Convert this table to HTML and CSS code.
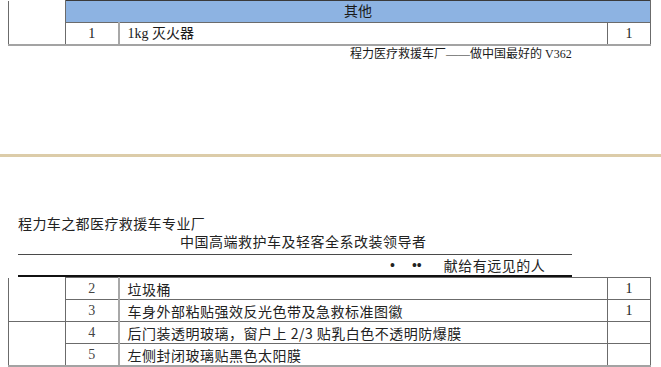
FILE: index.html
```html
<!DOCTYPE html>
<html lang="zh">
<head>
<meta charset="utf-8">
<link rel="stylesheet" href="styles.css">
</head>
<body>
<section class="page-top">
  <table class="tbl">
    <colgroup><col class="w1"><col class="w2"><col class="w3"><col class="w4"></colgroup>
    <tr class="row hdr-row"><td rowspan="2" class="c1"></td><td colspan="3" class="hdr">其他</td></tr>
    <tr class="row last"><td class="num">1</td><td class="item">1kg 灭火器</td><td class="qty">1</td></tr>
  </table>
  <p class="caption">程力医疗救援车厂——做中国最好的 V362</p>
</section>
<div class="divider"></div>
<section class="page-bottom">
  <div class="head">
    <div class="head-l1">程力车之都医疗救援车专业厂</div>
    <div class="head-l2">中国高端救护车及轻客全系改装领导者</div>
    <div class="head-l3"><span class="dot">•</span><span class="dots">••</span><span class="gift">献给有远见的人</span></div>
  </div>
  <table class="tbl tbl2">
    <colgroup><col class="w1"><col class="w2"><col class="w3"><col class="w4"></colgroup>
    <tr class="row"><td rowspan="2" class="c1"></td><td class="num">2</td><td class="item">垃圾桶</td><td class="qty">1</td></tr>
    <tr class="row"><td class="num">3</td><td class="item">车身外部粘贴强效反光色带及急救标准图徽</td><td class="qty">1</td></tr>
    <tr class="row"><td rowspan="2" class="c1 last"></td><td class="num">4</td><td class="item">后门装透明玻璃，窗户上 2/3 贴乳白色不透明防爆膜</td><td class="qty"></td></tr>
    <tr class="row last"><td class="num">5</td><td class="item">左侧封闭玻璃贴黑色太阳膜</td><td class="qty"></td></tr>
  </table>
</section>
</body>
</html>
```

FILE: styles.css
```css
html, body {
  margin: 0;
  padding: 0;
  background: #fff;
}
body {
  font-family: "Liberation Serif", "Noto Sans CJK SC", serif;
  color: #1a1a1a;
  width: 661px;
  height: 367px;
  overflow: hidden;
}
.tbl {
  border-collapse: collapse;
  table-layout: fixed;
  width: 642px;
  margin-left: 8px;
}
.w1 { width: 57px; }
.w2 { width: 53px; }
.w3 { width: 489px; }
.w4 { width: 43px; }
.tbl td {
  padding: 0;
  border: 1px solid #6b6b6b;
  font-size: 14px;
  line-height: 20px;
  height: 21px;
  vertical-align: middle;
  white-space: nowrap;
  overflow: hidden;
}
.tbl .num {
  text-align: center;
  border-right: 2px solid #a8a8a8;
}
.tbl .item {
  padding-left: 8px;
}
.tbl .qty {
  text-align: center;
}
.tbl .c1 {
  border-top: none;
}
.tbl .last,
.tbl .last td {
  border-bottom: 2px solid #a3a3a3;
}
.hdr {
  background: #8db3e2;
  text-align: center;
  font-size: 14px;
  border-top: 1px solid #3a3a3a !important;
}
.caption {
  margin: 1px 0 0 350px;
  font-size: 12px;
  line-height: 14px;
}
.divider {
  margin-top: 93px;
  height: 3px;
  background: #dccca9;
}
.page-bottom {
  padding-top: 57px;
}
.head {
  margin-left: 18px;
  width: 554px;
  font-family: "Noto Sans CJK SC", sans-serif;
  font-size: 14px;
  color: #222;
}
.head-l1 {
  line-height: 18px;
  height: 18px;
  letter-spacing: 0.4px;
}
.head-l2 {
  padding-left: 162px;
  line-height: 18px;
  height: 22px;
  border-bottom: 1px solid #4a4a4a;
  letter-spacing: 0.5px;
}
.head-l3 {
  display: flex;
  align-items: center;
  padding-left: 372px;
  height: 20px;
  border-bottom: 2px solid #111;
}
.dot, .dots {
  font-family: "Liberation Sans", sans-serif;
  font-size: 14px;
  line-height: 20px;
}
.dot { margin-right: 17px; }
.dots { letter-spacing: 0; margin-right: 22px; }
.gift { letter-spacing: 0.5px; line-height: 20px; }
.tbl2 td {
  font-family: "Liberation Serif", "Noto Sans CJK SC", serif;
  font-size: 14px;
  height: 21px;
  line-height: 20px;
}
.tbl2 .item {
  font-family: "Noto Sans CJK SC", sans-serif;
  letter-spacing: 0.5px;
  color: #222;
}
.tbl2 .num {
  color: #444;
}
```
